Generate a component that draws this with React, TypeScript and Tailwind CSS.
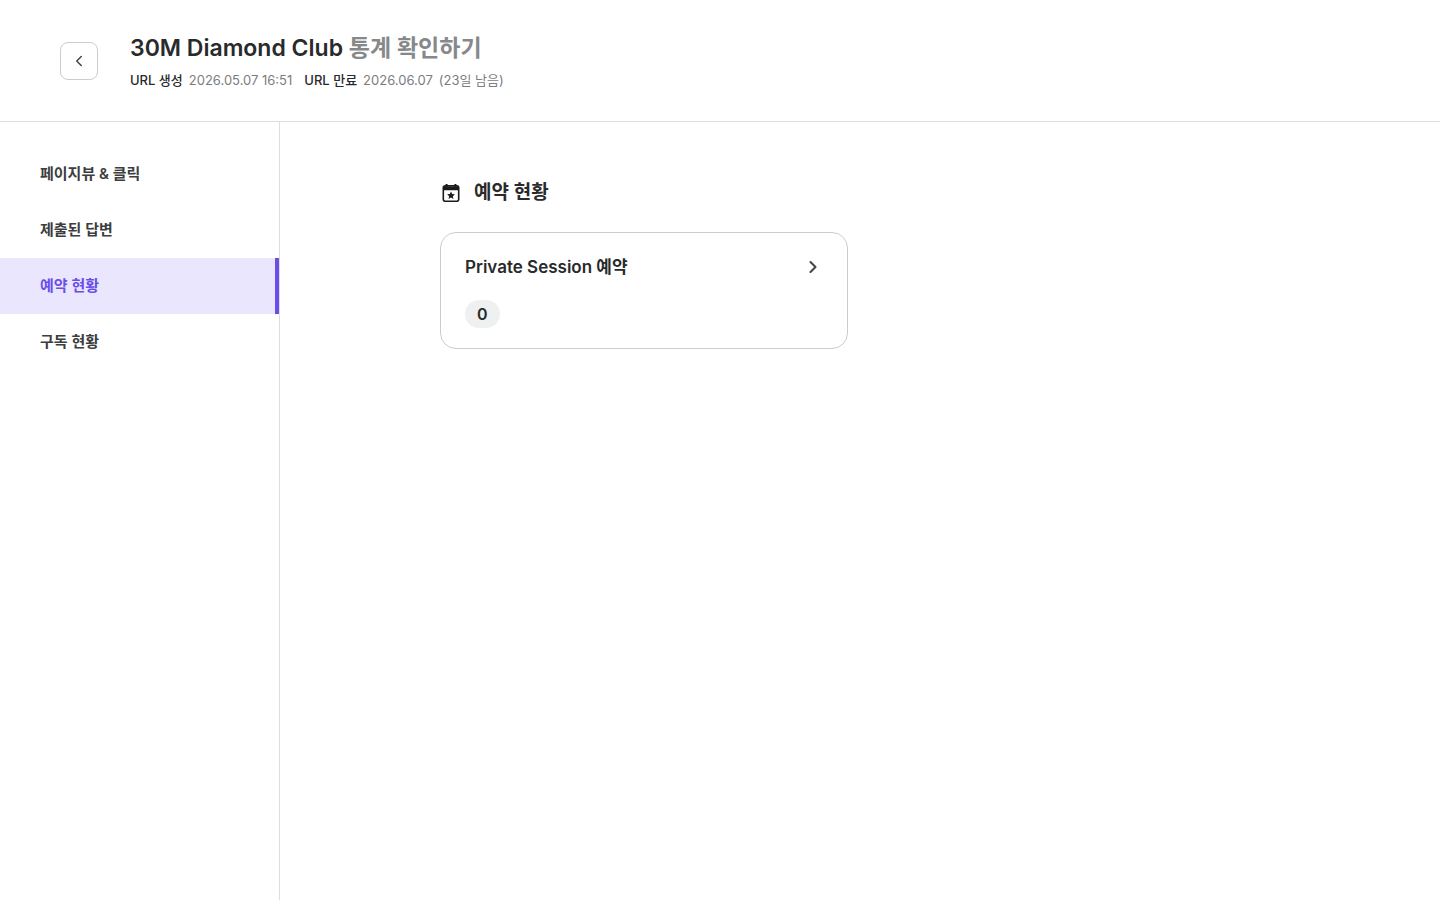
import { ChevronLeft, ChevronRight } from "lucide-react";

const MENUS = [
  { label: "페이지뷰 & 클릭", active: false },
  { label: "제출된 답변", active: false },
  { label: "예약 현황", active: true },
  { label: "구독 현황", active: false },
];

function CalendarStarIcon() {
  return (
    <svg width="22" height="22" viewBox="0 0 22 22" fill="none" className="text-[#1c1c1c]">
      <rect x="3.3" y="3.8" width="15.4" height="15.4" rx="2" stroke="currentColor" strokeWidth="1.6" />
      <path d="M3 4.2h16v4H3zM5.6 2h2v3h-2zM14.4 2h2v3h-2z" fill="currentColor" />
      <path d="M11 9.4l1.2 2.5 2.7.4-2 1.9.5 2.7-2.4-1.3-2.4 1.3.5-2.7-2-1.9 2.7-.4z" fill="currentColor" />
    </svg>
  );
}

export default function App() {
  return (
    <div className="flex min-h-screen flex-col bg-white font-['Inter','Noto_Sans_CJK_KR',sans-serif] text-[#292a2b]">
      <header className="flex items-center gap-8 border-b border-[#ddd] px-15 py-8">
        <button
          type="button"
          aria-label="뒤로 가기"
          className="flex size-[38px] items-center justify-center rounded-lg border border-[#ccc] text-[#444]"
        >
          <ChevronLeft size={18} />
        </button>
        <div>
          <h1 className="text-[23px] font-semibold leading-8">
            30M Diamond Club <span className="text-[#86888a]">통계 확인하기</span>
          </h1>
          <p className="mt-2 flex gap-3 text-[13px] leading-[17px]">
            <span className="flex gap-1.5">
              <strong className="font-medium">URL 생성</strong>
              <span className="text-[#7b7d7f]">2026.05.07 16:51</span>
            </span>
            <span className="flex gap-1.5">
              <strong className="font-medium">URL 만료</strong>
              <span className="text-[#7b7d7f]">2026.06.07</span>
              <span className="text-[#7b7d7f]">(23일 남음)</span>
            </span>
          </p>
        </div>
      </header>

      <div className="flex flex-1">
        <nav className="w-70 border-r border-[#ddd] pt-6">
          {MENUS.map((menu) => (
            <a
              key={menu.label}
              href="#"
              className={`flex h-14 items-center px-10 text-[15px] font-semibold ${
                menu.active ? "border-r-4 border-[#6b4eea] bg-[#e9e6fd] text-[#6b4eea]" : "text-[#3c3d3e]"
              }`}
            >
              {menu.label}
            </a>
          ))}
        </nav>

        <main className="flex-1 px-40 pt-14">
          <h2 className="flex items-center gap-3 text-[19px] font-semibold leading-[30px]">
            <CalendarStarIcon />
            예약 현황
          </h2>
          <a href="#" className="mt-6 block w-102 rounded-2xl border border-[#ccc] px-6 py-5">
            <div className="flex items-center justify-between text-[17px] font-semibold leading-7">
              Private Session 예약
              <ChevronRight size={20} strokeWidth={2.5} className="text-[#444]" />
            </div>
            <span className="mt-[19px] flex w-fit rounded-full bg-[#eff0f0] px-3 font-semibold leading-7">0</span>
          </a>
        </main>
      </div>
    </div>
  );
}
